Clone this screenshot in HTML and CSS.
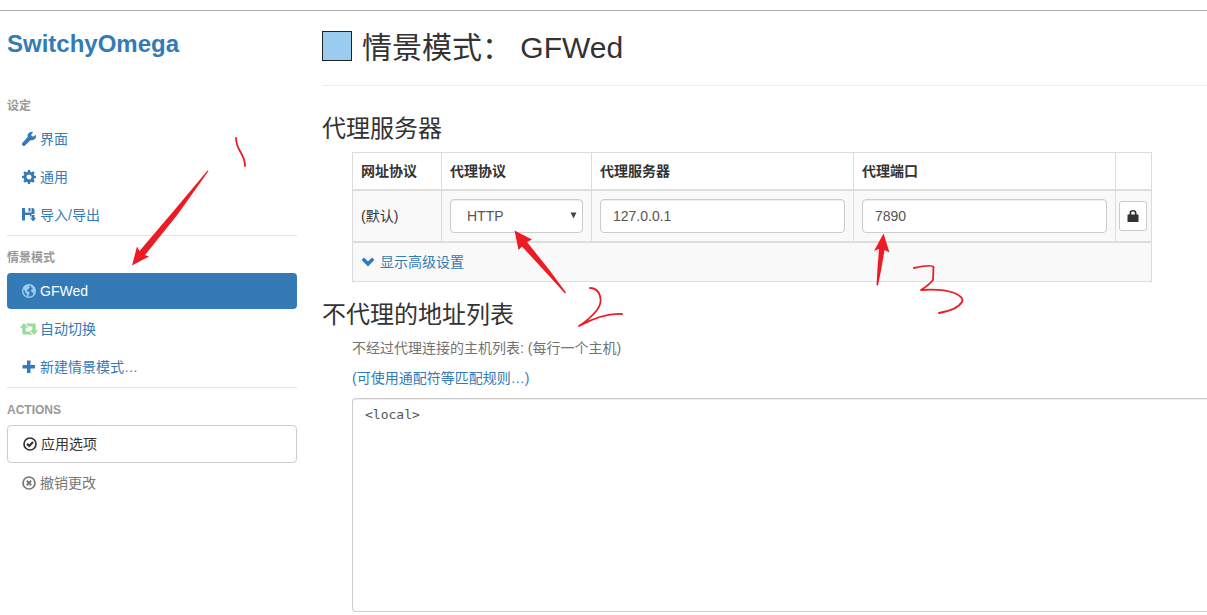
FILE: index.html
```html
<!DOCTYPE html>
<html lang="zh-CN">
<head>
<meta charset="utf-8">
<title>SwitchyOmega</title>
<meta name="viewport" content="width=device-width, initial-scale=1">
<link rel="stylesheet" href="styles.css">
</head>
<body>
<div class="page">
  <nav class="sidebar">
    <a class="brand" href="#">SwitchyOmega</a>

    <h2 class="nav-heading">设定</h2>
    <ul class="nav-list">
      <li><a class="nav-item" href="#"><svg class="icon" viewBox="0 0 14 14"><path fill="currentColor" d="M13.800 2.700 11.600 4.600 9.700 4.200 9.200 2.400 11.200.3C9.500-.3 7.500.2 6.400 1.400 5.500 2.400 5.300 3.700 5.700 4.900L.500 10.800C-.200 11.600-.200 12.800.500 13.500 1.200 14.200 2.300 14.100 3 13.400L8.800 8C10.100 8.500 11.700 8.200 12.800 7.100 14 5.900 14.400 4.200 13.800 2.700Z"/></svg>界面</a></li>
      <li><a class="nav-item" href="#"><svg class="icon" viewBox="0 0 14 14"><g fill="currentColor"><path fill-rule="evenodd" d="M7 1.700a5.300 5.300 0 1 0 0 10.600A5.300 5.300 0 0 0 7 1.700Zm0 2.800a2.500 2.500 0 1 1 0 5 2.500 2.500 0 0 1 0-5Z"/><path id="tooth" d="M5.500 2.500 5.900 0H8.100l.4 2.500Z"/><use href="#tooth" transform="rotate(45 7 7)"/><use href="#tooth" transform="rotate(90 7 7)"/><use href="#tooth" transform="rotate(135 7 7)"/><use href="#tooth" transform="rotate(180 7 7)"/><use href="#tooth" transform="rotate(225 7 7)"/><use href="#tooth" transform="rotate(270 7 7)"/><use href="#tooth" transform="rotate(315 7 7)"/></g></svg>通用</a></li>
      <li><a class="nav-item" href="#"><svg class="icon" viewBox="0 0 14 14"><path fill="currentColor" d="M0 0H3V4.500H9.500V0H11L12.500 1.500V6H9.500V8.500H8V7H3V12.500H0ZM6.500 0H8.500V3.500H6.500ZM9.800 7H12.500V10H14L11.200 13.500 8.200 10H9.800Z"/></svg>导入/导出</a></li>
    </ul>

    <hr class="divider">
    <h2 class="nav-heading">情景模式</h2>
    <ul class="nav-list">
      <li><a class="nav-item active" href="#" aria-current="page"><svg class="icon profile-blue" viewBox="0 0 14 14"><circle cx="7" cy="7" r="6.300" fill="none" stroke="currentColor" stroke-width="1.400"/><path fill="currentColor" d="M1 5C1.500 3 3.200 1.100 5.500.8L7.800 1.200 7 2.500 8 3.500 6.700 4.500 6.200 5.500 4.800 6 5 7.200 6.500 7.500 7.800 8.700 7 10.200 6.200 12.800 5 12 4.700 9.500 3 8.200 2.700 6.300ZM9.200 1.300 11.500 2.500 13.200 5.500 12.800 8.800 11.500 10.500 10.800 8.600 9.200 7.800 9 6 10.200 5.200 11 4.500 9.700 4 9.200 3Z"/></svg>GFWed</a></li>
      <li><a class="nav-item" href="#"><svg class="icon icon-wide profile-green" viewBox="0 0 18 12"><path fill="currentColor" d="M4 0 8.200 4.800H5.700V8.500H9.800L12.200 11.500H3.200Q2.300 11.500 2.300 10.500V4.800H-.200ZM14 12 9.800 7.200H12.300V3.500H8.200L5.800.5H14.800Q15.700.5 15.700 1.500V7.200H18.200Z"/></svg>自动切换</a></li>
      <li><a class="nav-item" href="#"><svg class="icon" viewBox="0 0 14 14"><path fill="currentColor" d="M5 .500H8.500V5H13V8.500H8.500V13H5V8.500H.500V5H5Z"/></svg>新建情景模式…</a></li>
    </ul>

    <hr class="divider">
    <h2 class="nav-heading">ACTIONS</h2>
    <div class="nav-list">
      <button class="nav-item apply" type="button"><svg class="icon" viewBox="0 0 14 14"><circle cx="7" cy="7" r="6" fill="none" stroke="currentColor" stroke-width="1.700"/><path fill="none" stroke="currentColor" stroke-width="2.200" d="M4 6.900 6.200 8.900 10 5"/></svg>应用选项</button>
      <button class="nav-item discard" type="button"><svg class="icon" viewBox="0 0 14 14"><circle cx="7" cy="7" r="6" fill="none" stroke="currentColor" stroke-width="1.700"/><path fill="none" stroke="currentColor" stroke-width="2" d="M4.800 4.800 9.200 9.200M9.200 4.800 4.800 9.200"/></svg>撤销更改</button>
    </div>
  </nav>

  <main class="content">
    <header class="page-header">
      <button class="swatch" type="button" aria-label="颜色"></button>
      <h1 class="page-title">情景模式： GFWed</h1>
    </header>

    <section class="section">
      <h3 class="section-title">代理服务器</h3>
      <table class="servers">
        <colgroup>
          <col class="col-scheme"><col class="col-protocol"><col><col><col class="col-lock">
        </colgroup>
        <thead>
          <tr><th>网址协议</th><th>代理协议</th><th>代理服务器</th><th>代理端口</th><th></th></tr>
        </thead>
        <tbody>
          <tr>
            <td>(默认)</td>
            <td>
              <div class="select-box">
                <select class="control select" aria-label="代理协议"><option>HTTP</option><option>HTTPS</option><option>SOCKS4</option><option>SOCKS5</option></select>
                <svg class="caret" viewBox="0 0 7 7"><path fill="#444" d="M.500.500H6.500L3.500 6.500Z"/></svg>
              </div>
            </td>
            <td><input class="control" type="text" value="127.0.0.1" aria-label="代理服务器"></td>
            <td><input class="control" type="text" value="7890" aria-label="代理端口"></td>
            <td class="lock-cell"><button class="lock" type="button" aria-label="代理登录"><svg class="lock-icon" viewBox="0 0 12 12"><path fill="currentColor" fill-rule="evenodd" d="M1 4.500H2.500V3Q2.500 0 6 0T9.500 3V4.500H11Q11.500 4.500 11.500 5V11.500Q11.500 12 11 12H1Q.500 12 .500 11.500V5Q.500 4.500 1 4.500ZM4.200 4.500H7.800V3Q7.800 1.600 6 1.600T4.200 3Z"/></svg></button></td>
          </tr>
        </tbody>
        <tfoot>
          <tr><td colspan="5"><a class="link advanced" href="#"><svg class="icon" viewBox="0 0 14 14"><path fill="none" stroke="currentColor" stroke-width="3.500" d="M1.800 3.800 7 9 12.200 3.800"/></svg>显示高级设置</a></td></tr>
        </tfoot>
      </table>
    </section>

    <section class="section">
      <h3 class="section-title">不代理的地址列表</h3>
      <label class="help" for="bypass">不经过代理连接的主机列表: (每行一个主机)</label>
      <p class="help"><a class="link" href="#">(可使用通配符等匹配规则…)</a></p>
      <textarea class="bypass" id="bypass" rows="10" spellcheck="false">&lt;local&gt;</textarea>
    </section>
  </main>

  <svg class="annotations" width="1207" height="615" viewBox="0 0 1207 615" aria-hidden="true">
    <g fill="#ed1c24">
      <path d="M208.500 171 178 214 145 255 149 256.500 132 265.500 137 246.500 139.500 251 174 210.500 207.500 170.500Z"/>
      <path d="M514.500 230.500 532 239.500 527 242 549 269.500 566 292.500 565 293.500 545.500 272 522 246.500 518.500 250Z"/>
      <path d="M883.500 233.500 889.500 252.500 884.500 250 881.500 268 878 285.500H876.500L877.500 268 879 249 874 251Z"/>
    </g>
    <g fill="none" stroke="#ed1c24" stroke-width="1.800" stroke-linecap="round" stroke-linejoin="round">
      <path d="M236 138C236 151 245 153 245 166"/>
      <path d="M590 288C600 288 604 301 597 310Q590 319 579 326C592 319 606 313 622 314"/>
      <path d="M914 268Q932 264 933.500 267L933 280Q929 285 921 290C952 288 965 296 962 302Q957 310 939 313"/>
    </g>
  </svg>
</div>
</body>
</html>
```

FILE: styles.css
```css
* {
  box-sizing: border-box;
}

body {
  margin: 0;
  background: #fff;
  color: #333;
  font: 14px/20px "Liberation Sans", "Noto Sans CJK SC", sans-serif;
  overflow-x: hidden;
}

h1, h2, h3, p, ul {
  margin: 0;
  padding: 0;
}

button, input, select {
  font: inherit;
}

a {
  color: #337ab7;
  text-decoration: none;
}

.page {
  position: relative;
  display: flex;
  gap: 25px;
  margin-top: 10px;
  padding-left: 7px;
  border-top: 1px solid #aaa;
}

/* Sidebar */

.sidebar {
  flex: 0 0 290px;
  padding-top: 20px;
}

.brand {
  display: block;
  margin-bottom: 40px;
  font-size: 24px;
  line-height: 26px;
  font-weight: bold;
}

.nav-heading {
  margin-bottom: 6px;
  color: #999;
  font-size: 12px;
  line-height: 18px;
  font-weight: bold;
}

.nav-list {
  display: flex;
  flex-direction: column;
  gap: 2px;
  list-style: none;
}

.nav-item {
  display: flex;
  align-items: center;
  gap: 4px;
  width: 100%;
  padding: 8px 15px;
  border: 0;
  border-radius: 4px;
  background: none;
}

.nav-item.active {
  background: #337ab7;
  color: #fff;
}

.nav-item.apply {
  border: 1px solid #ccc;
  background: #fff;
  color: #333;
}

.nav-item.discard {
  color: #777;
}

.icon {
  flex: none;
  width: 14px;
  height: 14px;
  overflow: visible;
}

.icon-wide {
  width: 18px;
  height: 12px;
  margin: 0 -2px;
}

.profile-blue {
  color: #9ce;
}

.profile-green {
  color: #9d9;
}

.divider {
  height: 1px;
  margin: 2px 0 13px;
  border: 0;
  background: #e5e5e5;
}

/* Content */

.content {
  flex: 1;
  min-width: 0;
}

.page-header {
  display: flex;
  align-items: flex-start;
  gap: 10px;
  margin-bottom: 30px;
  padding: 20px 0;
  border-bottom: 1px solid #eee;
}

.swatch {
  width: 30px;
  height: 30px;
  padding: 0;
  border: 1px solid #222;
  background: #9ce;
}

.page-title {
  font-size: 30px;
  line-height: 34px;
  font-weight: normal;
}

.section {
  display: flex;
  flex-direction: column;
  gap: 10px;
  margin-bottom: 20px;
  padding-left: 30px;
}

.section:last-child {
  margin-bottom: 0;
}

.section-title {
  margin-left: -30px;
  font-size: 24px;
  line-height: 26px;
  font-weight: normal;
}

.servers {
  width: 100%;
  max-width: 800px;
  border: 1px solid #ddd;
  border-collapse: collapse;
  table-layout: fixed;
}

.servers th,
.servers td {
  padding: 8px;
  border: 1px solid #ddd;
  text-align: left;
}

.servers th {
  border-bottom-width: 2px;
}

.servers tbody td,
.servers tfoot td {
  background: #f9f9f9;
}

.servers tfoot td {
  padding: 9px 8px;
  border-top-width: 2px;
}

.col-scheme {
  width: 89px;
}

.col-protocol {
  width: 150px;
}

.col-lock {
  width: 36px;
}

.servers .lock-cell {
  padding: 0 3px;
}

.control {
  display: block;
  width: 100%;
  height: 34px;
  padding: 6px 12px;
  border: 1px solid #ccc;
  border-radius: 4px;
  background: #fff;
  box-shadow: inset 0 1px 1px rgba(0, 0, 0, 0.075);
  color: #555;
}

.select-box {
  position: relative;
}

.select {
  padding-left: 16px;
  appearance: none;
}

.caret {
  position: absolute;
  top: 13px;
  right: 6px;
  width: 7px;
  height: 7px;
  pointer-events: none;
}

.lock {
  display: flex;
  align-items: center;
  justify-content: center;
  width: 28px;
  height: 30px;
  padding: 0;
  border: 1px solid #ccc;
  border-radius: 3px;
  background: #fff;
  color: #333;
}

.lock-icon {
  width: 12px;
  height: 12px;
}

.advanced {
  display: flex;
  align-items: center;
  gap: 5px;
}

.help {
  color: #737373;
}

.bypass {
  display: block;
  width: 100%;
  padding: 6px 12px;
  border: 1px solid #ccc;
  border-right: 0;
  border-radius: 4px 0 0 4px;
  box-shadow: inset 0 1px 1px rgba(0, 0, 0, 0.075);
  color: #555;
  font: 13px/20px "DejaVu Sans Mono", monospace;
  resize: none;
}

/* Hand-drawn marks over the page */

.annotations {
  position: absolute;
  top: -11px;
  left: 0;
  pointer-events: none;
}
```
